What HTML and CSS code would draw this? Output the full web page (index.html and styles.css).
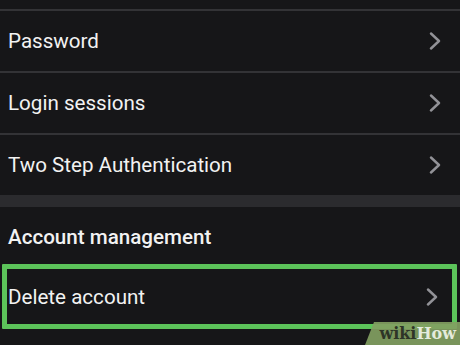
FILE: index.html
```html
<!DOCTYPE html>
<html>
<head>
<meta charset="utf-8">
<link rel="stylesheet" href="styles.css">
</head>
<body>
<div class="screen">
  <div class="top-gap"></div>
  <div class="group">
    <div class="row"><span class="label">Password</span><svg class="chev" viewBox="0 0 12 18"><polyline points="2,1.5 10,9 2,16.5"/></svg></div>
    <div class="row"><span class="label">Login sessions</span><svg class="chev" viewBox="0 0 12 18"><polyline points="2,1.5 10,9 2,16.5"/></svg></div>
    <div class="row"><span class="label">Two Step Authentication</span><svg class="chev" viewBox="0 0 12 18"><polyline points="2,1.5 10,9 2,16.5"/></svg></div>
  </div>
  <div class="band"></div>
  <div class="section-title">Account management</div>
  <div class="row highlighted"><span class="label">Delete account</span><svg class="chev" viewBox="0 0 12 18"><polyline points="2,1.5 10,9 2,16.5"/></svg></div>
  <div class="watermark"><span class="wiki">wiki</span><span class="how">How</span></div>
</div>
</body>
</html>
```

FILE: styles.css
```css
html, body {
  margin: 0;
  padding: 0;
  background: #161618;
}
.screen {
  position: relative;
  width: 460px;
  height: 345px;
  overflow: hidden;
  background: #161618;
  font-family: Roboto, "Noto Sans", sans-serif;
  color: #f2f2f2;
}
.top-gap {
  height: 9px;
}
.row {
  display: flex;
  align-items: center;
  justify-content: space-between;
  height: 60px;
  padding: 0 19px 0 8px;
  border-top: 2px solid #333336;
}
.label {
  font-size: 20.6px;
  line-height: 24px;
}
.chev {
  width: 12px;
  height: 18px;
  fill: none;
  stroke: #929297;
  stroke-width: 2.4;
  stroke-linecap: round;
  stroke-linejoin: round;
}
.band {
  height: 12px;
  background: #2b2b2e;
}
.section-title {
  height: 57px;
  display: flex;
  align-items: center;
  padding: 0 8px;
  font-size: 20.6px;
  font-weight: 500;
  box-sizing: border-box;
  padding-top: 2px;
}
.row.highlighted {
  border: 5px solid #5cc45a;
  border-radius: 1px;
  margin: 0 3px 0 2px;
  height: 55px;
  padding: 0 14px 0 1px;
}
.watermark {
  position: absolute;
  right: 0;
  bottom: 0;
  width: 95px;
  height: 23px;
  background: rgba(130, 160, 98, 0.92);
  clip-path: polygon(9px 0, 100% 0, 100% 100%, 0 100%);
  display: flex;
  align-items: center;
  justify-content: flex-end;
  padding-right: 4px;
  box-sizing: border-box;
  font-family: "DejaVu Serif", "Liberation Serif", serif;
  font-weight: bold;
  font-size: 16px;
  line-height: 20px;
}
.wiki {
  color: #2e3527;
}
.how {
  color: #e4ebdc;
}
```
